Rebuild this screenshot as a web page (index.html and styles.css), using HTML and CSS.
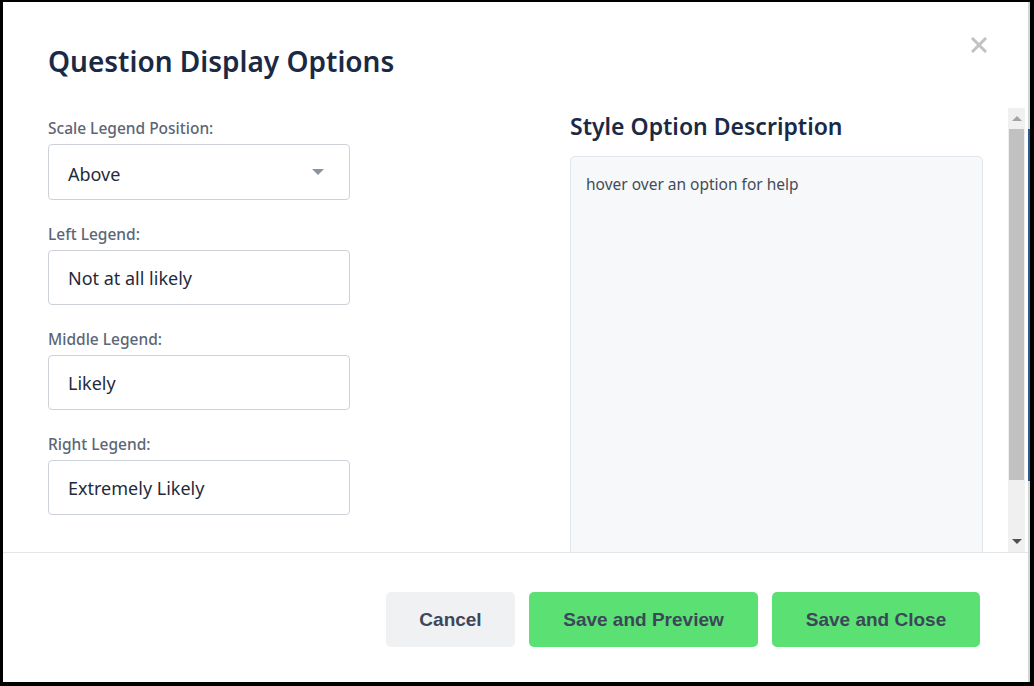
FILE: index.html
```html
<!DOCTYPE html>
<html lang="en">
<head>
<meta charset="utf-8">
<title>Question Display Options</title>
<link rel="stylesheet" href="styles.css">
</head>
<body>
<div class="frame">
  <div class="modal">
    <div class="header">
      <h1 class="title">Question Display Options</h1>
      <button class="close" aria-label="Close">
        <svg width="16" height="16" viewBox="0 0 16 16"><path d="M2 2 L14 14 M14 2 L2 14" stroke="#c2c2c2" stroke-width="3" stroke-linecap="square"/></svg>
      </button>
    </div>
    <div class="body">
      <div class="content">
        <div class="col-left">
          <div class="field">
            <label class="label">Scale Legend Position:</label>
            <div class="control select">
              <span>Above</span>
              <span class="caret"></span>
            </div>
          </div>
          <div class="field">
            <label class="label">Left Legend:</label>
            <div class="control">Not at all likely</div>
          </div>
          <div class="field">
            <label class="label">Middle Legend:</label>
            <div class="control">Likely</div>
          </div>
          <div class="field">
            <label class="label">Right Legend:</label>
            <div class="control">Extremely Likely</div>
          </div>
        </div>
        <div class="col-right">
          <h2 class="subtitle">Style Option Description</h2>
          <div class="desc">hover over an option for help</div>
        </div>
      </div>
      <div class="scrollbar">
        <div class="arrow up"></div>
        <div class="track">
          <div class="thumb"></div>
        </div>
        <div class="arrow down"></div>
      </div>
    </div>
    <div class="footer">
      <button class="btn btn-cancel">Cancel</button>
      <button class="btn btn-green btn-preview">Save and Preview</button>
      <button class="btn btn-green btn-save">Save and Close</button>
    </div>
  </div>
  <div class="edge"><div class="edge-blue"></div></div>
</div>
</body>
</html>
```
FILE: styles.css
```css
* { box-sizing: border-box; }
html, body { margin: 0; padding: 0; }
body {
  width: 1034px;
  height: 686px;
  overflow: hidden;
  background: #000;
  font-family: "Noto Sans", "Open Sans", sans-serif;
}
.frame {
  width: 1034px;
  height: 686px;
  border-style: solid;
  border-color: #000;
  border-width: 2px 4px 4px 3px;
  background: #fff;
  display: flex;
}
.modal {
  flex: 1;
  display: flex;
  flex-direction: column;
  min-width: 0;
}
.edge {
  width: 2px;
  background: #d4d4d4;
  padding-top: 127px;
}
.edge-blue {
  height: 352px;
  background: #2b5e8e;
}
.header {
  height: 106px;
  display: flex;
  justify-content: space-between;
  align-items: flex-start;
  padding: 0 41px 0 45px;
}
.title {
  margin: 41px 0 0 0;
  font-size: 28px;
  line-height: 36px;
  font-weight: 600;
  color: #1b2a44;
}
.close {
  margin-top: 35px;
  border: 0;
  background: transparent;
  padding: 0;
  width: 16px;
  height: 16px;
  display: flex;
}
.body {
  height: 445px;
  display: flex;
  border-bottom: 1px solid #e2e5e9;
}
.content {
  flex: 1;
  overflow: hidden;
  display: flex;
  padding: 0 25px 0 45px;
}
.col-left {
  width: 302px;
  padding-top: 10px;
  display: flex;
  flex-direction: column;
  gap: 24px;
}
.field {
  display: flex;
  flex-direction: column;
  gap: 6px;
}
.label {
  font-size: 15.5px;
  line-height: 20px;
  font-weight: 500;
  color: #5b6676;
}
.control {
  height: 55px;
  border: 1px solid #cdd2d8;
  border-radius: 4px;
  padding: 0 19px;
  display: flex;
  align-items: center;
  font-size: 18px;
  color: #1f2b3b;
}
.select {
  height: 56px;
  justify-content: space-between;
  padding-top: 4px;
  padding-right: 25px;
}
.caret {
  width: 0;
  height: 0;
  margin-top: -4px;
  border-left: 6px solid transparent;
  border-right: 6px solid transparent;
  border-top: 6px solid #8b939d;
}
.col-right {
  margin-left: auto;
  width: 413px;
  padding-top: 3px;
  display: flex;
  flex-direction: column;
}
.subtitle {
  margin: 0 0 15px 0;
  font-size: 23px;
  line-height: 30px;
  font-weight: 600;
  color: #1b2a44;
}
.desc {
  flex: 1;
  min-height: 420px;
  background: #f7f8fa;
  border: 1px solid #e2e5e9;
  border-radius: 5px;
  padding: 17px 15px;
  font-size: 15.5px;
  line-height: 20px;
  color: #444c57;
}
.scrollbar {
  width: 17px;
  margin-right: 3px;
  background: #f0f0f0;
  display: flex;
  flex-direction: column;
}
.arrow {
  height: 21px;
  display: flex;
  align-items: center;
  justify-content: center;
}
.arrow::before {
  content: "";
  width: 0;
  height: 0;
  border-left: 5px solid transparent;
  border-right: 5px solid transparent;
}
.up::before { border-bottom: 5px solid #a3a3a3; }
.down::before { border-top: 5px solid #505050; }
.track {
  flex: 1;
  padding: 0 1px;
}
.thumb {
  height: 351px;
  background: #c1c1c1;
}
.footer {
  flex: 1;
  display: flex;
  justify-content: flex-end;
  align-items: center;
  gap: 14px;
  padding: 4px 48px 0 0;
}
.btn {
  height: 55px;
  border: 0;
  border-radius: 5px;
  font-family: "Liberation Sans", Arial, sans-serif;
  font-weight: 700;
  font-size: 19px;
  color: #3c4759;
  padding: 0;
}
.btn-cancel {
  width: 129px;
  background: #f0f1f3;
}
.btn-green {
  background: #5be074;
}
.btn-preview { width: 229px; }
.btn-save { width: 208px; }
```
